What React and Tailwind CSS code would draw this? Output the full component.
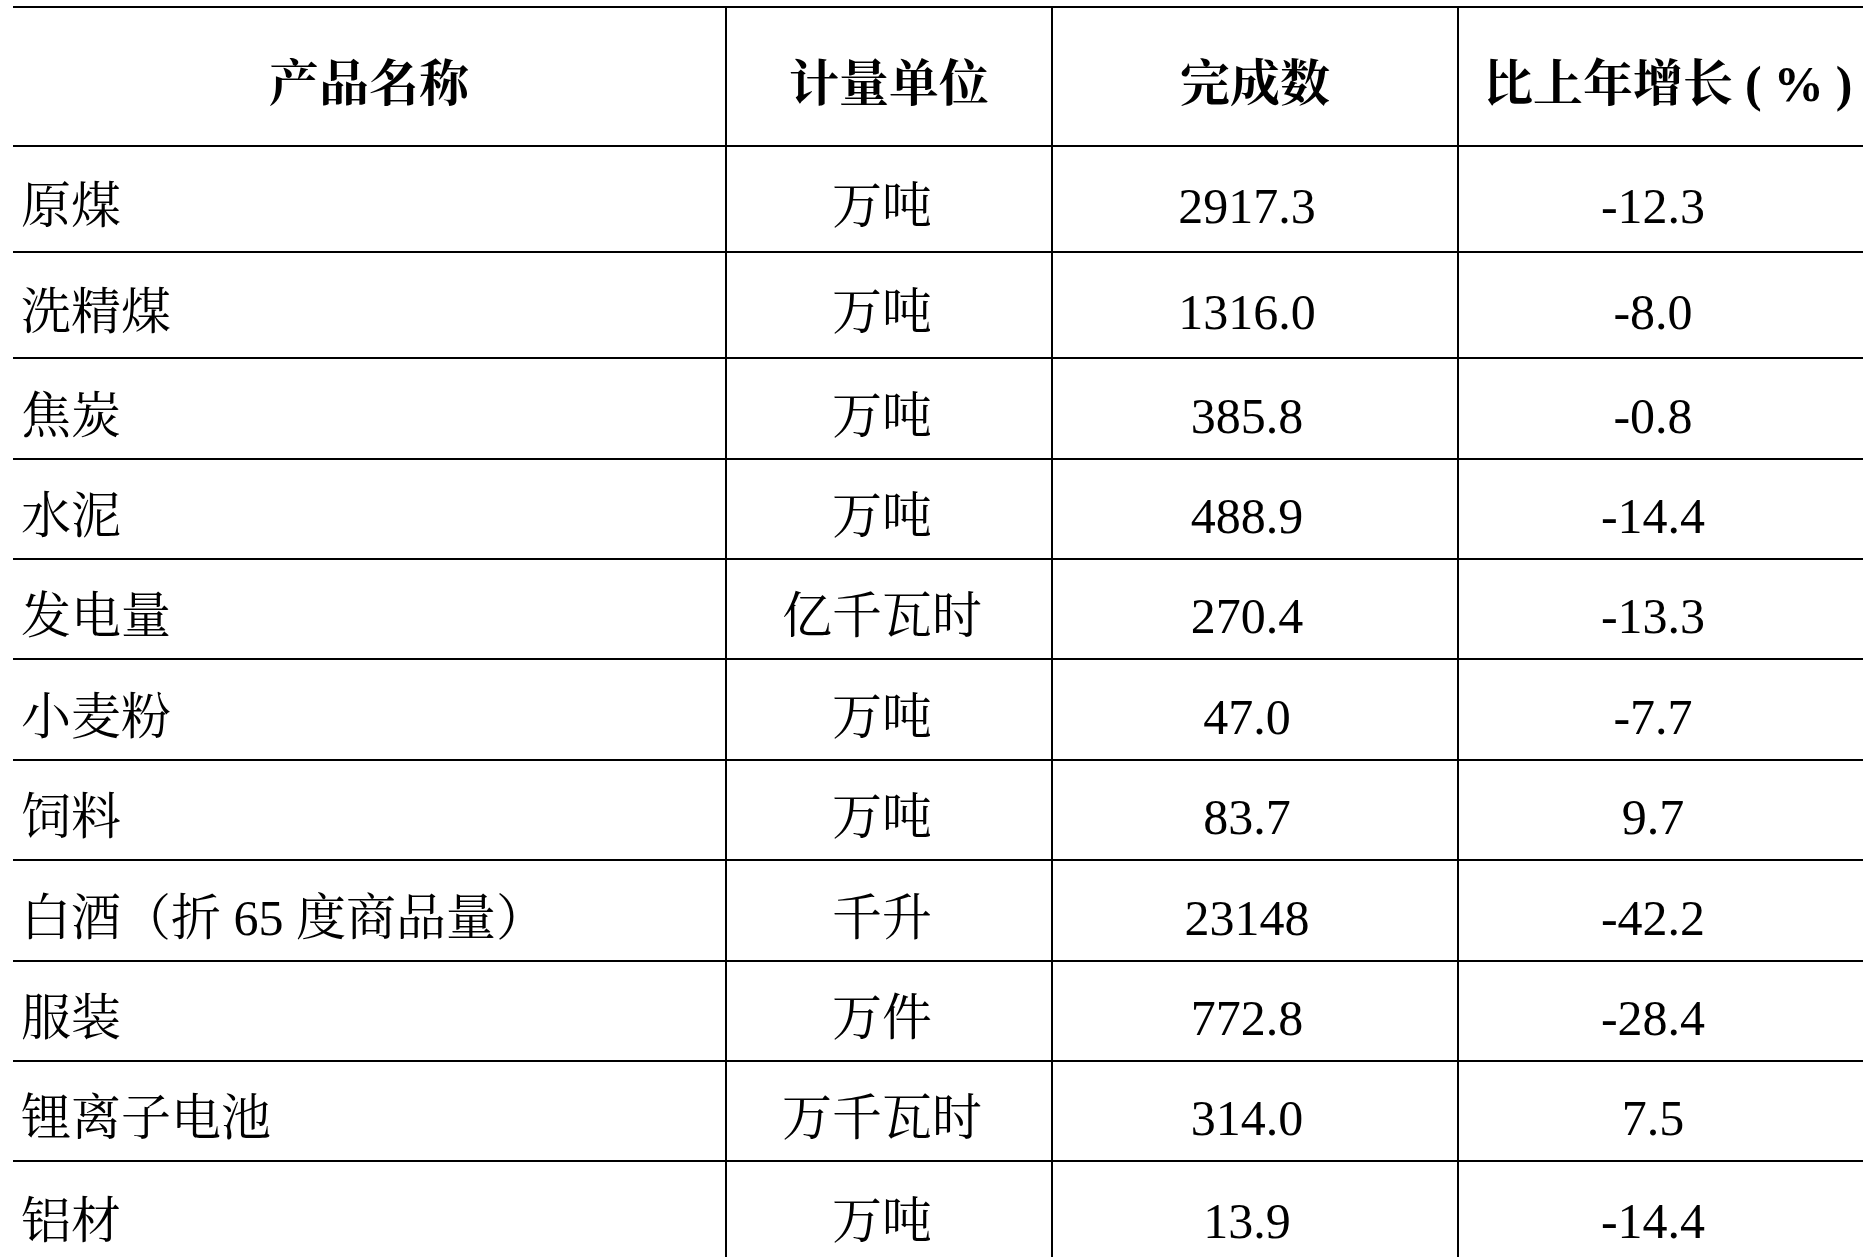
import React from "react";

const rows = [
  { name: "原煤", unit: "万吨", value: "2917.3", growth: "-12.3", h: "h-[106px]" },
  { name: "洗精煤", unit: "万吨", value: "1316.0", growth: "-8.0", h: "h-[106px]" },
  { name: "焦炭", unit: "万吨", value: "385.8", growth: "-0.8", h: "h-[101px]" },
  { name: "水泥", unit: "万吨", value: "488.9", growth: "-14.4", h: "h-[100px]" },
  { name: "发电量", unit: "亿千瓦时", value: "270.4", growth: "-13.3", h: "h-[100px]" },
  { name: "小麦粉", unit: "万吨", value: "47.0", growth: "-7.7", h: "h-[101px]" },
  { name: "饲料", unit: "万吨", value: "83.7", growth: "9.7", h: "h-[100px]" },
  { name: "白酒（折 65 度商品量）", unit: "千升", value: "23148", growth: "-42.2", h: "h-[101px]" },
  { name: "服装", unit: "万件", value: "772.8", growth: "-28.4", h: "h-[100px]" },
  { name: "锂离子电池", unit: "万千瓦时", value: "314.0", growth: "7.5", h: "h-[100px]" },
  { name: "铝材", unit: "万吨", value: "13.9", growth: "-14.4", h: "h-[106px]" },
];

const font = {
  fontFamily:
    '"Liberation Serif", "Noto Serif CJK SC", "Noto Sans CJK SC", serif',
};

export default function App() {
  return (
    <div
      className="w-[1866px] h-[1257px] overflow-hidden bg-white text-black pt-[6px] pl-[13px]"
      style={font}
    >
      <div className="w-[1850px]">
        <div className="flex h-[139px] border-t-2 border-black text-[50px] font-bold leading-none">
          <div className="w-[712px] flex items-center justify-center pt-[14px]">产品名称</div>
          <div className="w-[326px] flex items-center justify-center pt-[14px] border-l-2 border-black">计量单位</div>
          <div className="w-[406px] flex items-center justify-center pt-[14px] border-l-2 border-black">完成数</div>
          <div className="w-[406px] flex items-center justify-start pt-[14px] pl-[24px] border-l-2 border-black whitespace-nowrap">
            <span>比上年增长</span>
            <span className="ml-[12px]">(</span>
            <span className="ml-[12px]">%</span>
            <span className="ml-[12px]">)</span>
          </div>
        </div>
        {rows.map((r) => (
          <div
            key={r.name}
            className={`flex ${r.h} border-t-2 border-black text-[50px] leading-none`}
          >
            <div className="w-[712px] flex items-center pl-[8px] pt-[14px]">{r.name}</div>
            <div className="w-[326px] flex items-center justify-center pt-[14px] pr-[14px] border-l-2 border-black">{r.unit}</div>
            <div className="w-[406px] flex items-center justify-center pt-[14px] pr-[16px] border-l-2 border-black">{r.value}</div>
            <div className="w-[406px] flex items-center justify-center pt-[14px] pr-[16px] border-l-2 border-black">{r.growth}</div>
          </div>
        ))}
      </div>
    </div>
  );
}
